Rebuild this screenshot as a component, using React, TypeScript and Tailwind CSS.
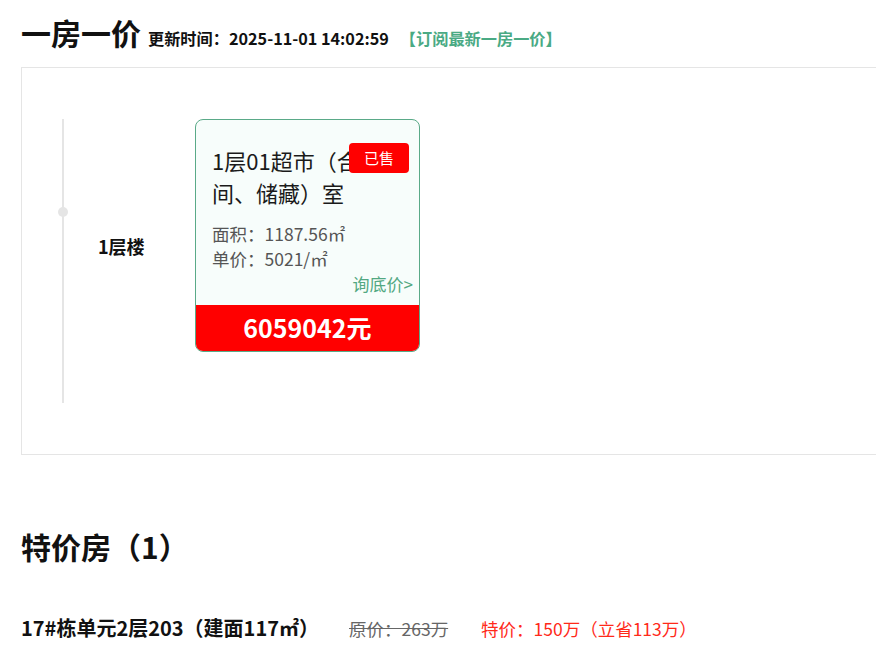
import React from "react";

export default function App() {
  return (
    <div className="w-[876px] h-[668px] overflow-hidden bg-white text-[#111]" style={{ fontFamily: '"Noto Sans CJK SC", "Noto Sans", sans-serif' }}>
      <div className="w-[900px] pl-[21px]">
        <div className="flex items-baseline pt-[11px] h-[67px]">
          <h1 className="text-[30px] leading-[42px] font-bold">一房一价</h1>
          <span className="ml-[7px] text-[16.2px] font-bold">更新时间：2025-11-01 14:02:59</span>
          <span className="ml-[11px] text-[16.2px] font-bold text-[#4aaa84]">【订阅最新一房一价】</span>
        </div>
        <div className="border border-[#e5e5e5] h-[388px] pl-[40px] pt-[51px]">
          <div className="flex">
            <div className="relative w-[2px] h-[284px] bg-[#e5e5e5]">
              <div className="absolute left-[-4px] top-[88px] w-[10px] h-[10px] rounded-full bg-[#e5e5e5]" />
            </div>
            <div className="w-[131px] pl-[34px] pt-[113px] h-[233px]">
              <span className="text-[18px] leading-[28px] font-bold">1层楼</span>
            </div>
            <div className="relative w-[225px] h-[233px] border border-[#5aaa88] rounded-[8px] bg-[#f7fdfb] overflow-hidden flex flex-col">
              <div className="flex-1 pl-[16px] pr-[6px] pt-[24px]">
                <div className="text-[22px] leading-[32px] text-[#1a1a1a] whitespace-nowrap">1层01超市（合</div>
                <div className="text-[22px] leading-[32px] text-[#1a1a1a]">间、储藏）室</div>
                <div className="mt-[13px] text-[17.5px] leading-[25px] text-[#555]">面积：1187.56㎡</div>
                <div className="text-[17.5px] leading-[25px] text-[#555]">单价：5021/㎡</div>
                <div className="text-right text-[17px] leading-[25px] text-[#52a882]">询底价&gt;</div>
              </div>
              <div className="h-[46px] bg-[#ff0000] flex items-center justify-center text-white text-[25px] font-bold">6059042元</div>
              <div className="absolute left-[153px] top-[23px] w-[60px] h-[30px] rounded-[4px] bg-[#ff0000] text-white text-[15px] flex items-center justify-center">已售</div>
            </div>
          </div>
        </div>
        <div className="mt-[71px] text-[30px] font-bold leading-[40px]">特价房（1）</div>
        <div className="mt-[47px] flex items-baseline">
          <span className="text-[20px] font-bold w-[328px]">17#栋单元2层203（建面117㎡）</span>
          <span className="text-[17.5px] text-[#666] line-through w-[132px]">原价：263万</span>
          <span className="text-[17.5px] text-[#ff2a1a]">特价：150万（立省113万）</span>
        </div>
      </div>
    </div>
  );
}
